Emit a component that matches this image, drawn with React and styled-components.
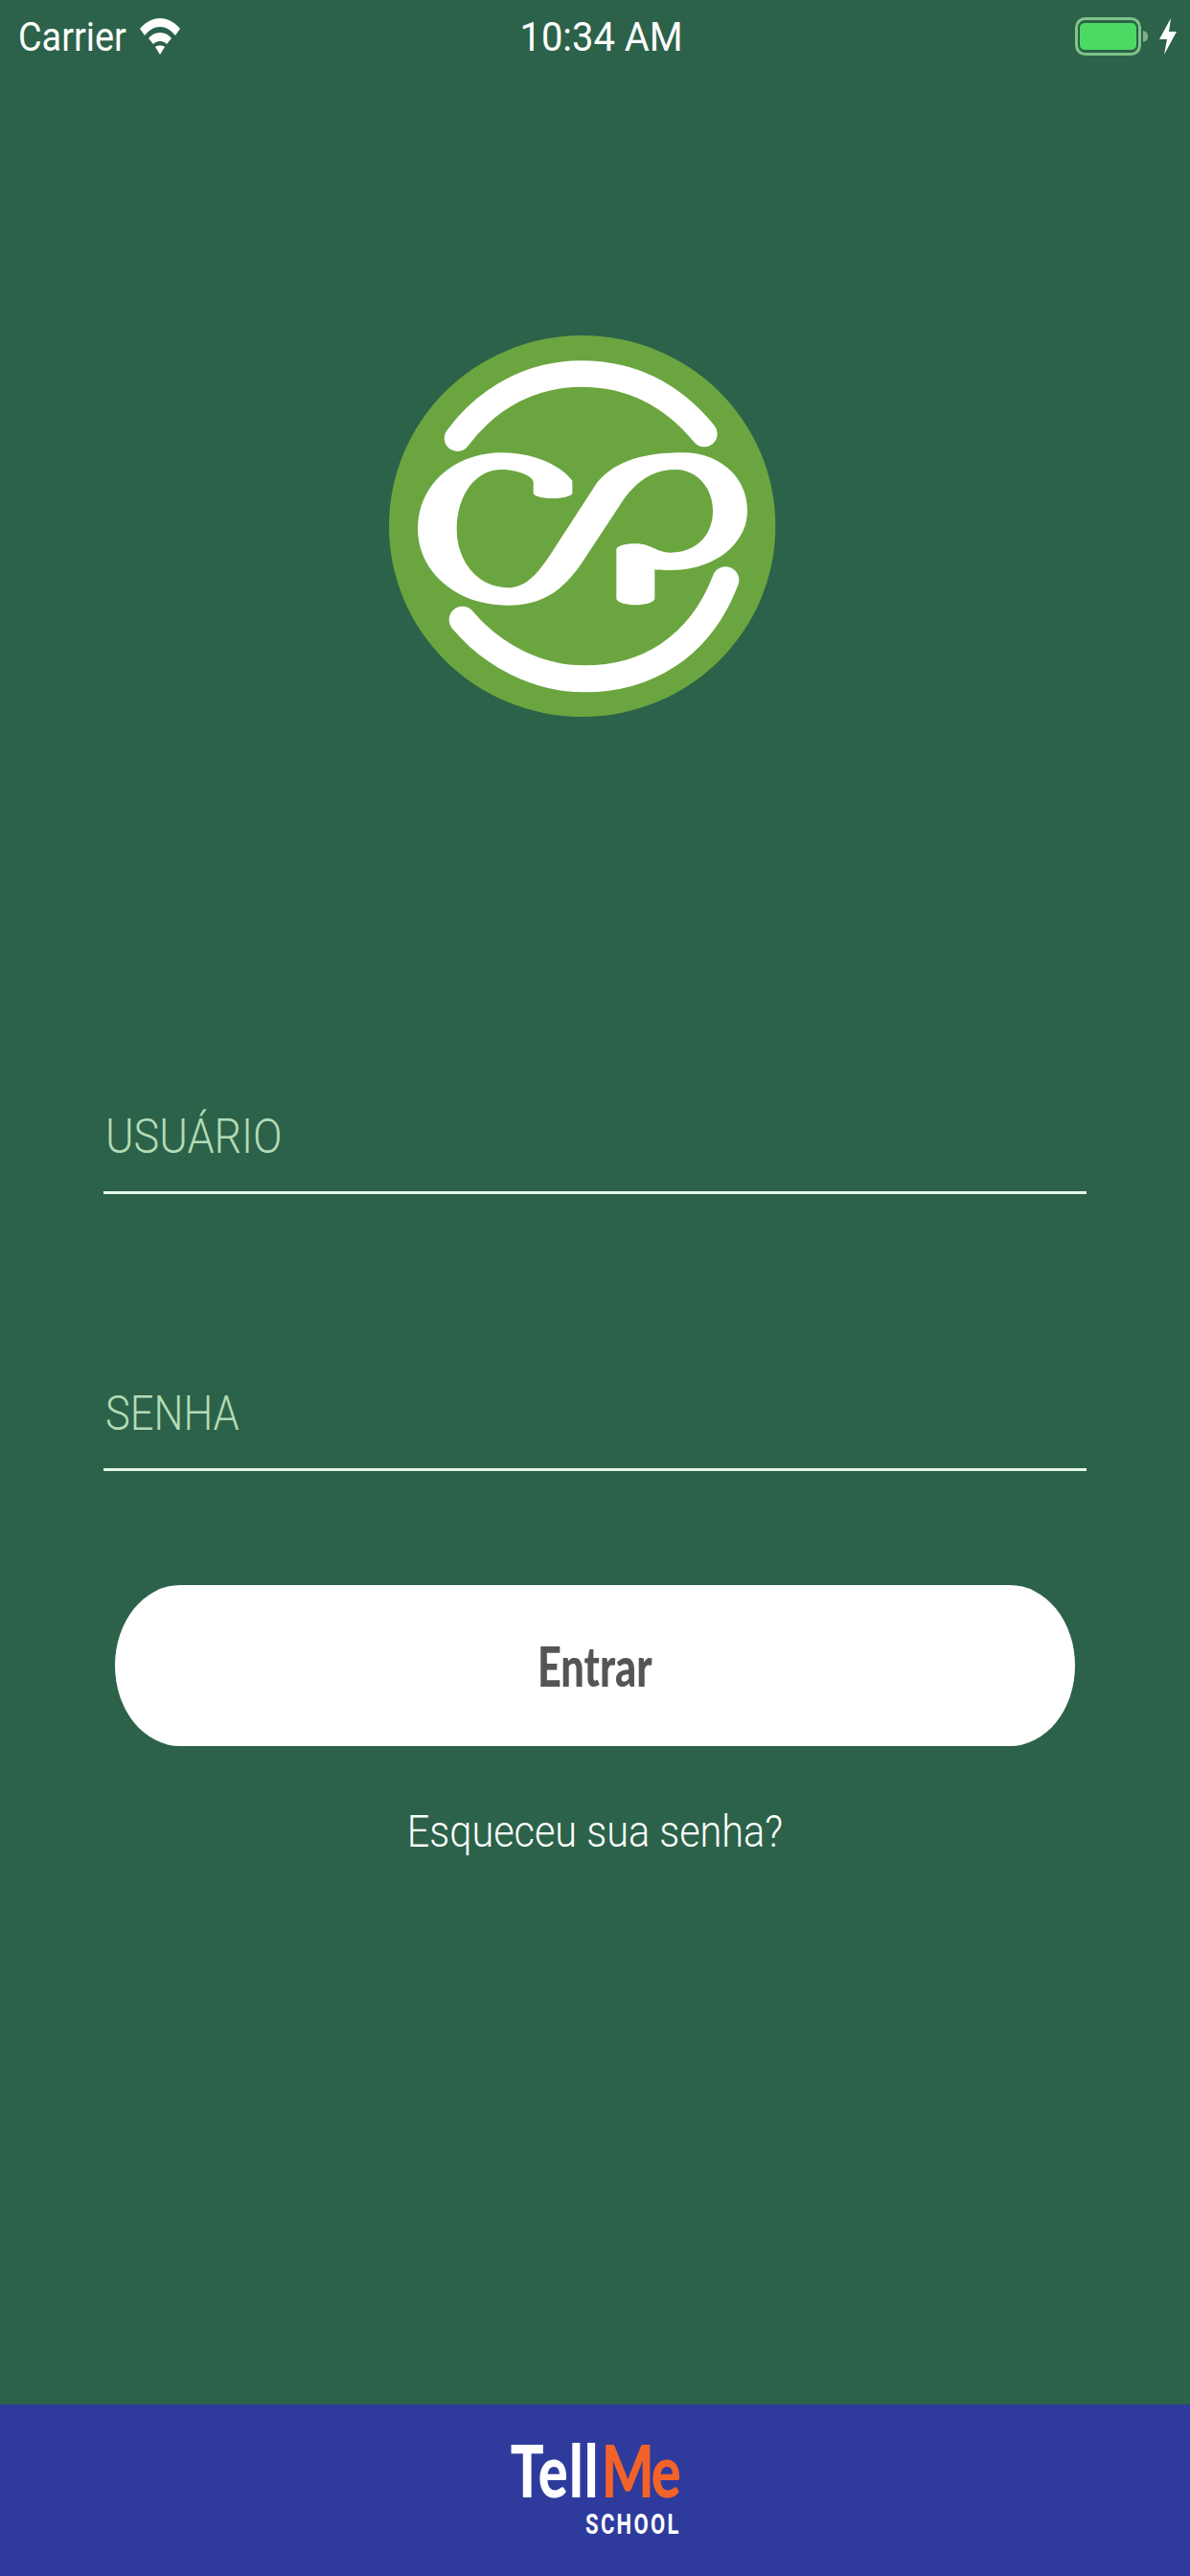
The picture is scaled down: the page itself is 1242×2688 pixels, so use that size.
import React from "react";
import styled, { createGlobalStyle } from "styled-components";

const Global = createGlobalStyle`
  html, body { margin: 0; padding: 0; background: #2c6249; }
  #root { width: 1242px; height: 2688px; }
`;

const Screen = styled.div`
  width: 1242px;
  height: 2688px;
  display: flex;
  flex-direction: column;
  background: #2c6249;
  font-family: Roboto, "Liberation Sans", sans-serif;
  overflow: hidden;
`;

const StatusBar = styled.div`
  height: 76px;
  display: grid;
  grid-template-columns: 1fr auto 1fr;
  align-items: center;
  padding: 0 14px 0 19px;
  color: #fff;
  font-size: 42px;
  font-weight: 400;
`;

const StatusLeft = styled.div`
  display: flex;
  align-items: center;
  gap: 2px;
`;

const StatusRight = styled.div`
  display: flex;
  align-items: center;
  justify-content: flex-end;
  gap: 10px;
`;

const Squeezed = styled.span`
  display: inline-block;
  transform: scaleX(${(p) => p.$x});
  transform-origin: ${(p) => p.$origin || "left"} center;
`;

const Clock = styled(Squeezed)`
  margin-left: 8px;
`;

const Main = styled.main`
  flex: 1;
  display: flex;
  flex-direction: column;
  padding: 0 108px;
`;

const LogoSlot = styled.div`
  margin: 254px 0 0 272px;
  width: 450px;
  height: 430px;
`;

const Field = styled.label`
  height: ${(p) => p.$height}px;
  margin-top: ${(p) => p.$top}px;
  display: flex;
  align-items: flex-end;
  padding: 0 0 27px 2px;
  box-sizing: border-box;
  border-bottom: 3px solid #e4f5e6;
  color: #b3dbb6;
  font-size: 50px;
  font-weight: 300;
  line-height: 60px;
`;

const LoginButton = styled.button`
  display: flex;
  align-items: center;
  justify-content: center;
  width: 1002px;
  height: 168px;
  margin: 119px 0 0 12px;
  border: 0;
  border-radius: 68px / 84px;
  background: #fff;
  color: #555;
  font-family: Lato, sans-serif;
  font-size: 57px;
  font-weight: 900;
  padding: 0;
`;

const Forgot = styled.a`
  margin-top: 59px;
  text-align: center;
  color: #fff;
  font-size: 46px;
  font-weight: 300;
  line-height: 60px;
`;

const Footer = styled.footer`
  height: 179px;
  background: #2e3b9c;
  display: flex;
  justify-content: center;
`;

const Brand = styled.div`
  margin: 34px 0 0 0;
  display: flex;
  flex-direction: column;
  align-items: flex-end;
  transform: scaleX(0.76);
  transform-origin: center;
`;

const BrandName = styled.div`
  font-family: Lato, sans-serif;
  font-size: 76px;
  line-height: 68px;
  font-weight: 900;
  color: #fff;
  letter-spacing: 1.5px;
`;

const BrandAccent = styled.span`
  color: #f2632a;
  letter-spacing: -3px;
  margin-left: 3px;
`;

const BrandSub = styled.div`
  margin-top: 9px;
  font-family: Roboto, sans-serif;
  font-size: 29px;
  line-height: 28px;
  font-weight: 700;
  letter-spacing: 3px;
  margin-right: -3px;
  color: #fff;
`;

const Wifi = () => (
  <svg width="42" height="38" viewBox="0 0 42 38">
    <path d="M0 11 C6 4 13 0 21 0 C29 0 36 4 42 11 L37 18 C32 12 27 9 21 9 C15 9 10 12 5 18 Z" fill="#fff" />
    <path d="M9 21 C12 17 16 15 21 15 C26 15 30 17 33 21 L28 27 C26 25 24 24 21 24 C18 24 16 25 14 27 Z" fill="#fff" />
    <path d="M16 30 C18 28 24 28 26 30 L21 38 Z" fill="#fff" />
  </svg>
);

const Battery = () => (
  <svg width="78" height="40" viewBox="0 0 78 40">
    <rect x="1.5" y="1.5" width="66" height="37" rx="9" fill="none" stroke="#7fc48a" strokeWidth="3" />
    <rect x="5" y="6" width="59" height="28" rx="5" fill="#4cd964" />
    <path d="M71 14 C75 15 76 17 76 20 C76 23 75 25 71 26 Z" fill="#7fae8a" />
  </svg>
);

const Bolt = () => (
  <svg width="18" height="38" viewBox="0 0 18 38">
    <path d="M12 0 L0 22 L8 22 L5 38 L18 14 L10 14 Z" fill="#fff" />
  </svg>
);

const CpLogo = () => (
  <svg width="450" height="430" viewBox="0 0 1350 1290">
    <ellipse cx="683" cy="657" rx="605" ry="597" fill="#6ba540" />
    <path d="M292 382 C390 250 530 180 680 180 C830 180 960 240 1065 368" fill="none" stroke="#fff" strokeWidth="82" strokeLinecap="round" />
    <path d="M308 950 C400 1060 540 1135 690 1135 C880 1135 1050 1040 1132 826" fill="none" stroke="#fff" strokeWidth="84" strokeLinecap="round" />
    <path
      d="M652 515 C610 460 520 427 430 427 C280 427 168 530 168 665 C168 800 290 905 450 905 C560 905 620 860 680 775 L815 570 C860 510 910 480 975 480 C1045 480 1092 540 1092 610 C1092 685 1040 740 960 740 C915 740 900 712 850 712 C815 712 790 720 790 730 L790 885 C800 910 900 910 910 885 L910 793 C925 795 945 795 960 795 C1100 795 1200 710 1200 610 C1200 500 1110 427 1000 427 C880 427 790 450 730 520 L600 720 C550 800 510 850 450 850 C360 850 290 770 290 665 C290 560 350 480 430 480 C480 480 530 500 530 520 L530 555 C540 575 640 575 652 555 Z"
      fill="#fff"
    />
  </svg>
);

export default function App() {
  return (
    <Screen>
      <Global />
      <StatusBar>
        <StatusLeft>
          <Squeezed $x={0.9}>Carrier</Squeezed>
          <Wifi />
        </StatusLeft>
        <Clock $x={0.95} $origin="center">10:34 AM</Clock>
        <StatusRight>
          <Battery />
          <Bolt />
        </StatusRight>
      </StatusBar>
      <Main>
        <LogoSlot>
          <CpLogo />
        </LogoSlot>
        <Field $top={350} $height={136}><Squeezed $x={0.9}>USUÁRIO</Squeezed></Field>
        <Field $top={153} $height={136}><Squeezed $x={0.87}>SENHA</Squeezed></Field>
        <LoginButton><Squeezed $x={0.76} $origin="center">Entrar</Squeezed></LoginButton>
        <Forgot><Squeezed $x={0.9} $origin="center">Esqueceu sua senha?</Squeezed></Forgot>
      </Main>
      <Footer>
        <Brand>
          <BrandName>
            Tell<BrandAccent>Me</BrandAccent>
          </BrandName>
          <BrandSub>SCHOOL</BrandSub>
        </Brand>
      </Footer>
    </Screen>
  );
}
